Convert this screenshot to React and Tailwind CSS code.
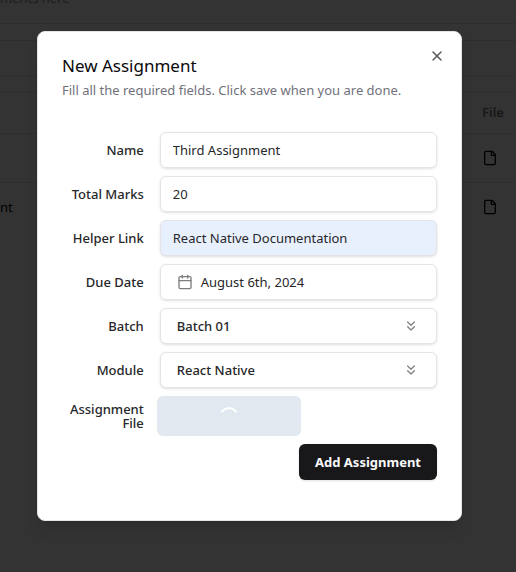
import { Calendar, ChevronsDown, File, X } from "lucide-react";

const inputBox =
  "col-span-3 h-9 w-full rounded-md border border-zinc-200 px-3 text-[13px] text-zinc-800 shadow-sm outline-none";

function Row({ label, htmlFor, children }) {
  return (
    <div className="grid grid-cols-4 items-center gap-4">
      <label htmlFor={htmlFor} className="text-right text-[13px] leading-[14px] font-medium whitespace-nowrap text-zinc-800">
        {label}
      </label>
      {children}
    </div>
  );
}

function Dropdown({ id, value }) {
  return (
    <div className="relative col-span-3">
      <select
        id={id}
        defaultValue={value}
        className="h-9 w-full appearance-none rounded-md border border-zinc-200 bg-white px-4 text-[13px] leading-5 font-medium text-zinc-800 shadow-sm outline-none"
      >
        <option>{value}</option>
      </select>
      <ChevronsDown className="pointer-events-none absolute top-2.5 right-[18px] size-4 opacity-50" />
    </div>
  );
}

function Backdrop() {
  return (
    <div className="absolute inset-0 overflow-hidden bg-[#333333] text-[13px] text-[#1c1c1c]" aria-hidden="true">
      <p className="-mt-3 h-9 border-b border-[#2e2e2e] leading-5">ments here</p>
      <div className="mt-4 h-9 border-y border-[#2e2e2e]" />
      <table className="mt-4 w-full border-t border-[#2e2e2e]">
        <thead>
          <tr className="h-[41px] border-b border-[#2e2e2e] text-[#171717]">
            <th />
            <th className="w-[34px] text-left font-semibold">File</th>
          </tr>
        </thead>
        <tbody className="text-black">
          <tr className="h-[49px] border-b border-[#2e2e2e]">
            <td />
            <td><File className="size-4" /></td>
          </tr>
          <tr className="h-[49px]">
            <td>nt</td>
            <td><File className="size-4" /></td>
          </tr>
        </tbody>
      </table>
    </div>
  );
}

export default function App() {
  return (
    <div className="relative min-h-screen font-['Noto_Sans','Open_Sans',sans-serif] text-zinc-950">
      <Backdrop />
      <div className="relative pt-[31px] pr-[54px] pb-[51px] pl-[37px]">
        <div
          role="dialog"
          aria-labelledby="title"
          className="relative grid gap-4 rounded-lg border border-zinc-200 bg-white p-6 shadow-lg"
        >
          <header className="flex flex-col gap-1">
            <h2 id="title" className="text-[17px] leading-5">New Assignment</h2>
            <p className="text-[13px] leading-5 text-zinc-500">Fill all the required fields. Click save when you are done.</p>
          </header>
          <form className="grid gap-2 py-4">
            <Row label="Name" htmlFor="name">
              <input id="name" defaultValue="Third Assignment" className={inputBox} />
            </Row>
            <Row label="Total Marks" htmlFor="marks">
              <input id="marks" defaultValue="20" className={inputBox} />
            </Row>
            <Row label="Helper Link" htmlFor="link">
              <input id="link" defaultValue="React Native Documentation" className={`${inputBox} bg-[#e8f0fe]`} />
            </Row>
            <Row label="Due Date" htmlFor="due">
              <button
                id="due"
                type="button"
                className="col-span-3 flex h-9 items-center gap-2 rounded-md border border-zinc-200 px-4 text-[13px] leading-5 text-zinc-800 shadow-sm"
              >
                <Calendar className="size-4 opacity-60" />
                August 6th, 2024
              </button>
            </Row>
            <Row label="Batch" htmlFor="batch">
              <Dropdown id="batch" value="Batch 01" />
            </Row>
            <Row label="Module" htmlFor="module">
              <Dropdown id="module" value="React Native" />
            </Row>
            <Row label={<>Assignment<br />File</>} htmlFor="file">
              <button
                id="file"
                type="button"
                aria-busy="true"
                aria-label="Uploading assignment file"
                className="col-span-3 -ml-[3px] flex h-10 w-36 items-center justify-center rounded-md bg-slate-200"
              >
                <svg viewBox="0 0 20 20" className="size-5" fill="none" stroke="white" strokeWidth="2">
                  <path d="M2.5 6.2a9 9 0 0 1 15 0" />
                </svg>
              </button>
            </Row>
            <button
              type="submit"
              className="h-9 justify-self-end rounded-md bg-zinc-900 px-4 text-[13px] leading-5 font-bold text-zinc-50 shadow-sm"
            >
              Add Assignment
            </button>
          </form>
          <button type="button" aria-label="Close" className="absolute top-4 right-4 opacity-70">
            <X className="size-4" />
          </button>
        </div>
      </div>
    </div>
  );
}
